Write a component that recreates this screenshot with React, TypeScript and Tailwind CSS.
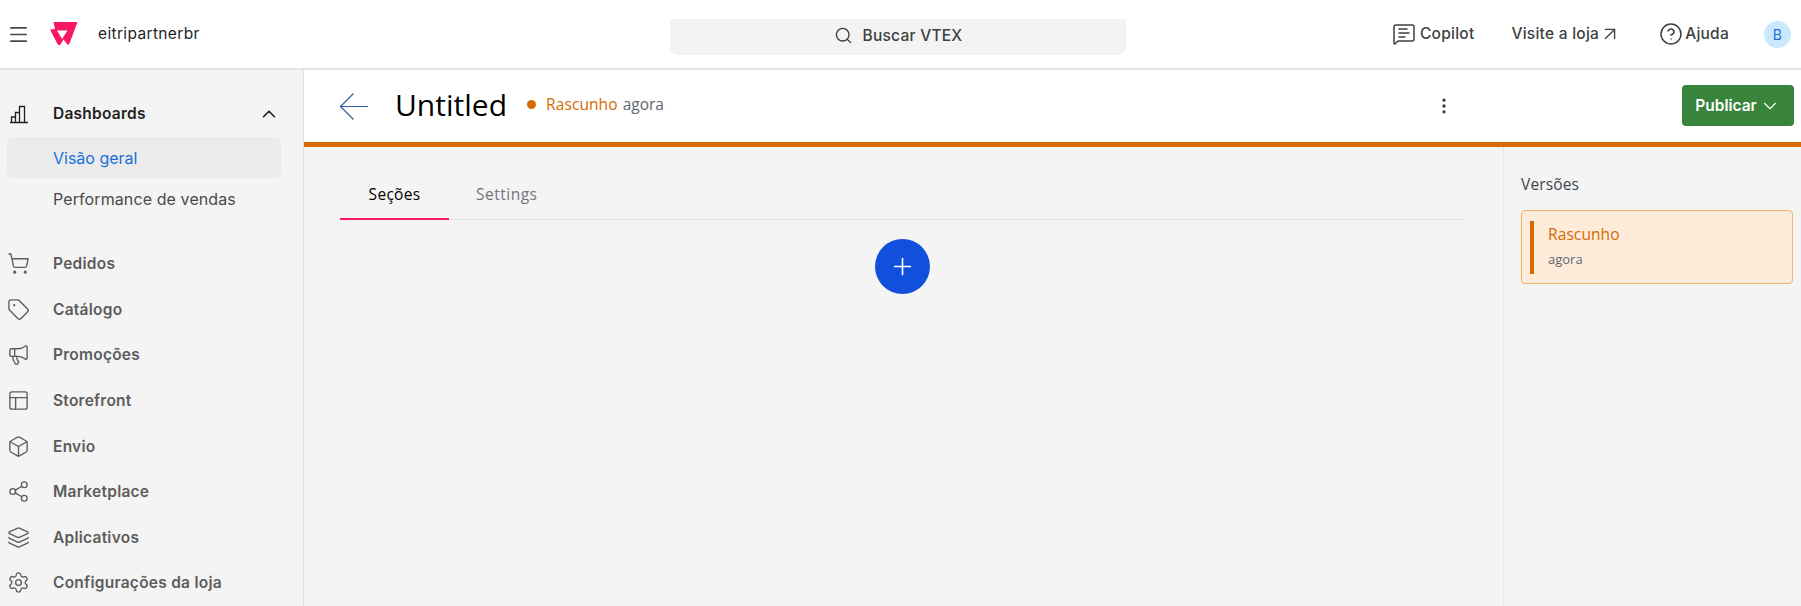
import React from 'react';
import {
  Menu, ChevronUp, ChevronDown, ShoppingCart, Tag, Megaphone, Layout, Box, Share2, Layers, Settings,
  Search, MessageSquareText, ArrowUpRight, CircleHelp, EllipsisVertical, Plus,
} from 'lucide-react';

const navItems = [
  { label: 'Pedidos', icon: ShoppingCart },
  { label: 'Catálogo', icon: Tag },
  { label: 'Promoções', icon: Megaphone },
  { label: 'Storefront', icon: Layout },
  { label: 'Envio', icon: Box },
  { label: 'Marketplace', icon: Share2 },
  { label: 'Aplicativos', icon: Layers },
  { label: 'Configurações da loja', icon: Settings },
];

const DashboardsIcon = () => (
  <svg width="20" height="20" viewBox="0 0 20 20" fill="none" stroke="#1f1f1f" strokeWidth="1.3">
    <path d="M1 18.5h18M2.5 18v-5h4v5M6.500 18V8.500h4V18M10.500 18V2.500h5V18" />
  </svg>
);

const VtexLogo = () => (
  <svg width="28" height="24" viewBox="0 0 28 24">
    <path
      fillRule="evenodd"
      fill="#f71963"
      d="M3.500 0H27.500L19.500 21.500Q18.500 23.500 17 22L13.500 17.500 10.500 22.500Q9 24 7.500 22L0 7.500 5 7ZM7 8.500 12 17 17.500 8.500Z"
    />
  </svg>
);

const BackArrow = () => (
  <svg width="30" height="29" viewBox="0 0 30 29" fill="none" stroke="#2a5ca8" strokeWidth="1.2">
    <path d="M29 14.500H2M14.500 1.500 1.500 14.500 14.500 27.500" />
  </svg>
);

function Sidebar() {
  return (
    <aside className="w-[304px] shrink-0 bg-[#f4f4f4] border-r border-[#e0e0e0] pt-[25px] font-['Inter',sans-serif]">
      <div className="flex items-center h-[38px] pl-[9px] pr-[23px]">
        <DashboardsIcon />
        <span className="ml-6 text-[15.5px] font-semibold tracking-[0.25px] text-[#1f1f1f]">Dashboards</span>
        <ChevronUp className="ml-auto text-[#1f1f1f]" size={22} strokeWidth={1.75} />
      </div>
      <div className="mt-[4px] mx-[7px] w-[274px] h-[41px] rounded-[6px] bg-[#ebebeb] flex items-center pl-[46px] text-[16px] text-[#1a6fdc]">
        Visão geral
      </div>
      <div className="h-[41px] flex items-center pl-[53px] text-[16px] tracking-[0.1px] text-[#4a4a4a]">Performance de vendas</div>
      <nav className="mt-[22px] flex flex-col">
        {navItems.map(({ label, icon: Icon }) => (
          <div key={label} className="h-[45.6px] flex items-center pl-[7px] text-[#5c5c5c]">
            <Icon size={23} strokeWidth={1.4} />
            <span className="ml-[23px] text-[15.5px] font-semibold tracking-[0.25px]">{label}</span>
          </div>
        ))}
      </nav>
    </aside>
  );
}

function TopBar() {
  return (
    <header className="h-[70px] shrink-0 bg-white border-b-2 border-[#e3e3e3] flex items-center relative font-['Inter',sans-serif]">
      <Menu className="ml-[7px] text-[#4a4a4a]" size={23} strokeWidth={1.75} />
      <div className="ml-[20px]"><VtexLogo /></div>
      <span className="ml-[20px] text-[15.5px] text-[#1f1f1f] tracking-[0.35px]">eitripartnerbr</span>
      <div className="absolute left-[670px] top-[19px] w-[456px] h-[36px] pb-[3px] rounded-b-[8px] bg-[#f3f3f3] flex items-center justify-center gap-[10px] text-[#3f3f3f]">
        <Search size={19} strokeWidth={1.75} />
        <span className="text-[15.5px] font-medium tracking-[0.25px]">Buscar VTEX</span>
      </div>
      <div className="ml-auto flex items-center text-[15.5px] font-medium text-[#3f3f3f] tracking-[0.25px] pr-[10px]">
        <MessageSquareText size={24} strokeWidth={1.5} />
        <span className="ml-[4px]">Copilot</span>
        <span className="ml-[37px]">Visite a loja</span>
        <ArrowUpRight className="ml-0" size={22} strokeWidth={1.5} />
        <CircleHelp className="ml-[38px]" size={24} strokeWidth={1.5} />
        <span className="ml-[2px]">Ajuda</span>
        <span className="ml-[35px] w-[27px] h-[27px] rounded-full bg-[#cce8ff] text-[#1a6fdc] text-[14px] font-normal flex items-center justify-center">B</span>
      </div>
    </header>
  );
}

function PageHeader() {
  return (
    <div className="h-[77px] shrink-0 bg-white border-b-[5px] border-[#d56a00] flex items-center pl-[35px] pr-[7px]">
      <BackArrow />
      <span className="ml-[26px] mb-[3px] text-[30px] text-black font-['Open_Sans',sans-serif]">Untitled</span>
      <span className="ml-[20px] mb-[3px] w-[9px] h-[9px] rounded-full bg-[#d56a00]" />
      <span className="ml-[10px] mb-[3px] text-[15.5px] tracking-[0.1px] text-[#d56a00] font-['Open_Sans',sans-serif]">Rascunho</span>
      <span className="ml-[5px] mb-[3px] text-[15.5px] text-[#5f6670] font-['Open_Sans',sans-serif]">agora</span>
      <EllipsisVertical className="ml-[770px] mb-[1px] text-[#3a3a3a]" size={20} strokeWidth={2} />
      <button className="ml-auto w-[112px] h-[41px] mb-[1px] rounded-[4px] bg-[#38843c] text-white text-[15.5px] font-semibold flex items-center justify-center gap-[2px] font-['Inter',sans-serif]">
        Publicar
        <ChevronDown size={22} strokeWidth={1.25} />
      </button>
    </div>
  );
}

function Content() {
  return (
    <div className="flex-1 min-h-0 flex bg-[#f4f4f4] font-['Open_Sans',sans-serif]">
      <section className="w-[1199px] pl-[36px] pr-[39px] pt-[26px]">
        <div className="flex border-b border-[#e0e0e0] h-[47px]">
          <div className="w-[109px] pb-[2px] flex items-center justify-center border-b-2 border-[#f71963] h-[47px] text-[15.5px] tracking-[0.3px] text-black">
            Seções
          </div>
          <div className="ml-[27px] pb-[2px] flex items-center h-[46px] text-[15.5px] tracking-[0.5px] text-[#72767c]">Settings</div>
        </div>
        <div className="flex justify-center mt-[19px]">
          <button className="w-[55px] h-[55px] rounded-full bg-[#1150dc] text-white flex items-center justify-center">
            <Plus size={27} strokeWidth={1.5} />
          </button>
        </div>
      </section>
      <aside className="flex-1 border-l border-[#e6e6e6] pl-[17px] pr-[8px] pt-[27px]">
        <div className="text-[15.5px] tracking-[0.15px] text-[#3f4650] leading-[20px]">Versões</div>
        <div className="mt-[16px] h-[74px] rounded-[4px] border border-[#f5b26b] bg-[#ffebd9] flex items-center pl-[8px]">
          <div className="w-[4px] h-[53px] bg-[#d56a00]" />
          <div className="ml-[14px] mb-[3px]">
            <div className="text-[15.5px] tracking-[0.1px] text-[#d56a00] leading-[20px]">Rascunho</div>
            <div className="mt-[6px] text-[13px] text-[#5f6670] leading-[18px]">agora</div>
          </div>
        </div>
      </aside>
    </div>
  );
}

export default function App() {
  return (
    <div className="h-[606px] w-[1801px] flex flex-col overflow-hidden bg-[#f4f4f4]">
      <TopBar />
      <div className="flex-1 min-h-0 flex">
        <Sidebar />
        <main className="flex-1 min-w-0 flex flex-col">
          <PageHeader />
          <Content />
        </main>
      </div>
    </div>
  );
}
